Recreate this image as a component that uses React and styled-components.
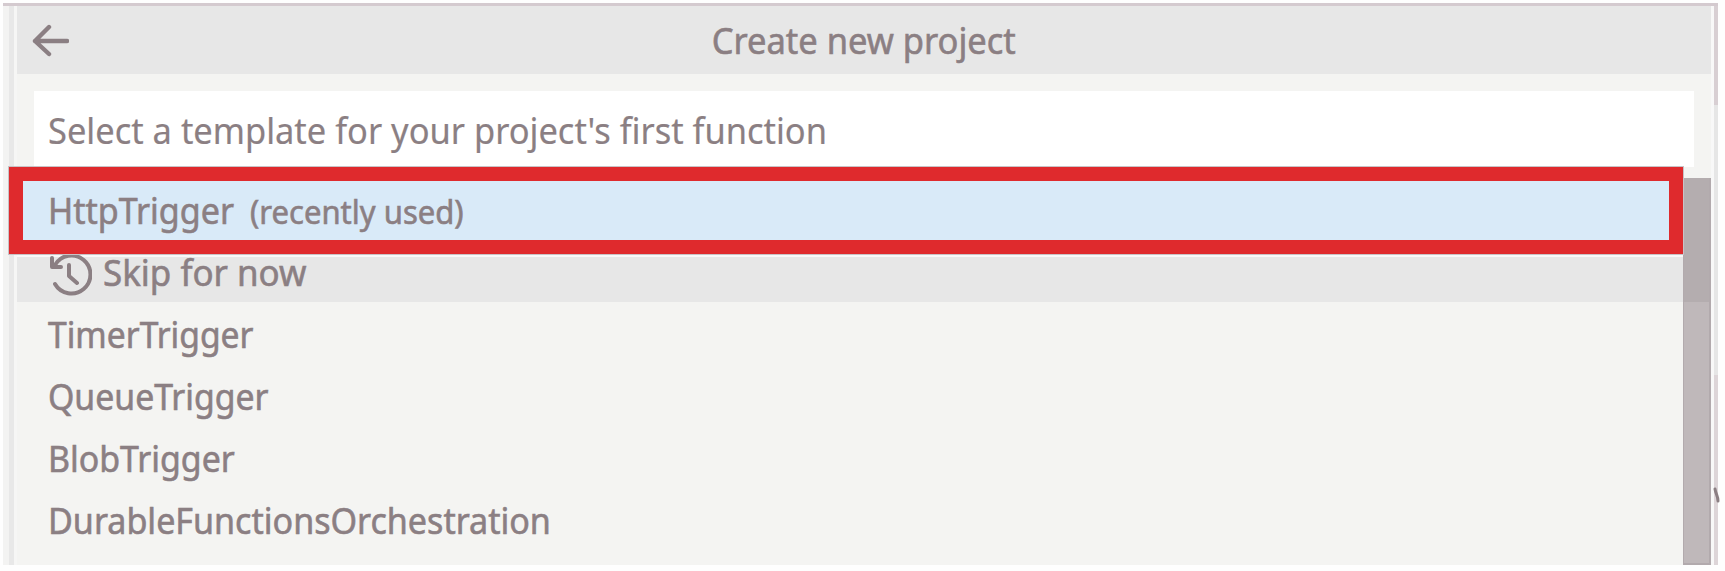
import React from "react";
import styled, { createGlobalStyle } from "styled-components";

const Global = createGlobalStyle`
  * { box-sizing: border-box; }
  body { margin: 0; background: #fff; overflow: hidden; font-family: "Noto Sans", "Open Sans", sans-serif; color: #8b7f83; }
`;
const Window = styled.div`
  position: relative;
  width: 1725px;
  height: 571px;
  padding: 3px 7px 7px 3px;
  background: #fefefe;
`;
const Frame = styled.div`
  display: flex;
  height: 562px;
  width: 1715px;
  border-top: 3px solid #d4cacf;
`;
const LeftEdge = styled.div`
  width: 14px;
  background: linear-gradient(to right, #f3f3f2 0 6px, #e8e8e8 6px 11px, #f6f6f5 11px);
`;
const Panel = styled.main`
  width: 1694px;
  display: flex;
  flex-direction: column;
  background: #f4f4f2;
`;
const Header = styled.header`
  display: grid;
  grid-template-columns: 90px 1fr 90px;
  height: 68px;
  background: #e7e7e7;
`;
const BackIcon = styled.svg`
  width: 38px;
  height: 34px;
  margin: 18px 0 0 14px;
`;
const Text = styled.span`
  display: inline-block;
  white-space: pre;
  font-size: ${(p) => p.$size || 36}px;
  line-height: 48px;
  -webkit-text-stroke: ${(p) => p.$stroke ?? 0.6}px #8b7f83;
  transform: scaleX(${(p) => p.$stretch || 1});
  transform-origin: ${(p) => p.$origin || "left"} center;
`;
const Title = styled.h1`
  margin: 11px 0 0;
  text-align: center;
  font-weight: 400;
  font-size: 36px;
  line-height: 48px;
`;
const Input = styled.div`
  width: 1660px;
  height: 76px;
  margin: 17px 0 0 17px;
  padding: 16px 0 0 14px;
  background: #fff;
`;
const ListArea = styled.div`
  display: flex;
  flex: 1;
  margin-top: 11px;
`;
const List = styled.div`
  flex: 1;
`;
const Row = styled.div`
  display: flex;
  height: ${(p) => p.$height || 62}px;
  padding: ${(p) => p.$top ?? 10}px 0 0 31px;
  background: ${(p) => p.$bg || "transparent"};
`;
const NameCell = styled.div`
  width: 202px;
`;
const HintCell = styled.div`
  padding-top: 1px;
`;
const SkipRow = styled(Row)`
  border-top: 3px solid #f8f8f8;
`;
const SkipLabel = styled.div`
  margin-top: -8px;
`;
const Scrollbar = styled.div`
  width: 28px;
  background: linear-gradient(#b4adaf 0 124px, #bfb8ba 124px);
  border: solid #b2aaad;
  border-width: 0 2px 2px 1px;
`;
const RightEdge = styled.div`
  width: 7px;
  background: linear-gradient(#d8cfd3 0 99px, #e6e6e6 99px 369px, #ddd5d8 369px);
  border-left: 3px solid #f8f8f8;
`;
const Highlight = styled.div`
  position: absolute;
  left: 9px;
  top: 167px;
  width: 1674px;
  height: 87px;
  border: 14px solid #df2a2d;
  outline: 1px solid #c9c3c6;
`;
const History = styled.svg`
  width: 43px;
  height: 44px;
  margin: -5px 11px 0 1px;
`;
const Fleck = styled.svg`
  position: absolute;
  left: 1711px;
  top: 486px;
  width: 10px;
  height: 22px;
`;
const templates = [
  ["TimerTrigger", 0.934],
  ["QueueTrigger", 0.938],
  ["BlobTrigger", 0.941],
  ["DurableFunctionsOrchestration", 0.946],
];

export default function App() {
  return (
    <Window>
      <Global />
      <Frame>
        <LeftEdge />
        <Panel>
          <Header>
            <BackIcon viewBox="0 0 38 34" fill="none" stroke="#8b7f83" strokeWidth="4.4" strokeLinecap="round" strokeLinejoin="round">
              <path d="M18 3L4 17L18 30M4 17H36" />
            </BackIcon>
            <Title><Text $origin="center" $stretch={0.958}>Create new project</Text></Title>
          </Header>
          <Input><Text $stroke={0.2} $stretch={0.957}>Select a template for your project's first function</Text></Input>
          <ListArea>
            <List>
              <Row $bg="#d9eaf8" $height={76} $top={9}>
                <NameCell><Text $stretch={0.946}>HttpTrigger</Text></NameCell>
                <HintCell><Text $size={32} $stretch={0.97}>(recently used)</Text></HintCell>
              </Row>
              <SkipRow $bg="#e7e7e7" $height={48} $top={0}>
                <History viewBox="0 0 43 44" fill="none" stroke="#8b7f83" strokeWidth="4" strokeLinecap="round" strokeLinejoin="round">
                  <path d="M6 32A19 19 0 1 0 6 13M3 6V15H12M20 13V24L28 31" />
                </History>
                <SkipLabel><Text $stretch={0.97}>Skip for now</Text></SkipLabel>
              </SkipRow>
              {templates.map(([name, stretch]) => (
                <Row key={name} $top={9}><Text $stretch={stretch}>{name}</Text></Row>
              ))}
            </List>
            <Scrollbar />
          </ListArea>
        </Panel>
        <RightEdge />
      </Frame>
      <Highlight />
      <Fleck viewBox="0 0 10 22" fill="none" stroke="#8b7f83" strokeWidth="3" strokeLinecap="round">
        <path d="M4 3C5 9 7 10 7 15" />
      </Fleck>
    </Window>
  );
}
